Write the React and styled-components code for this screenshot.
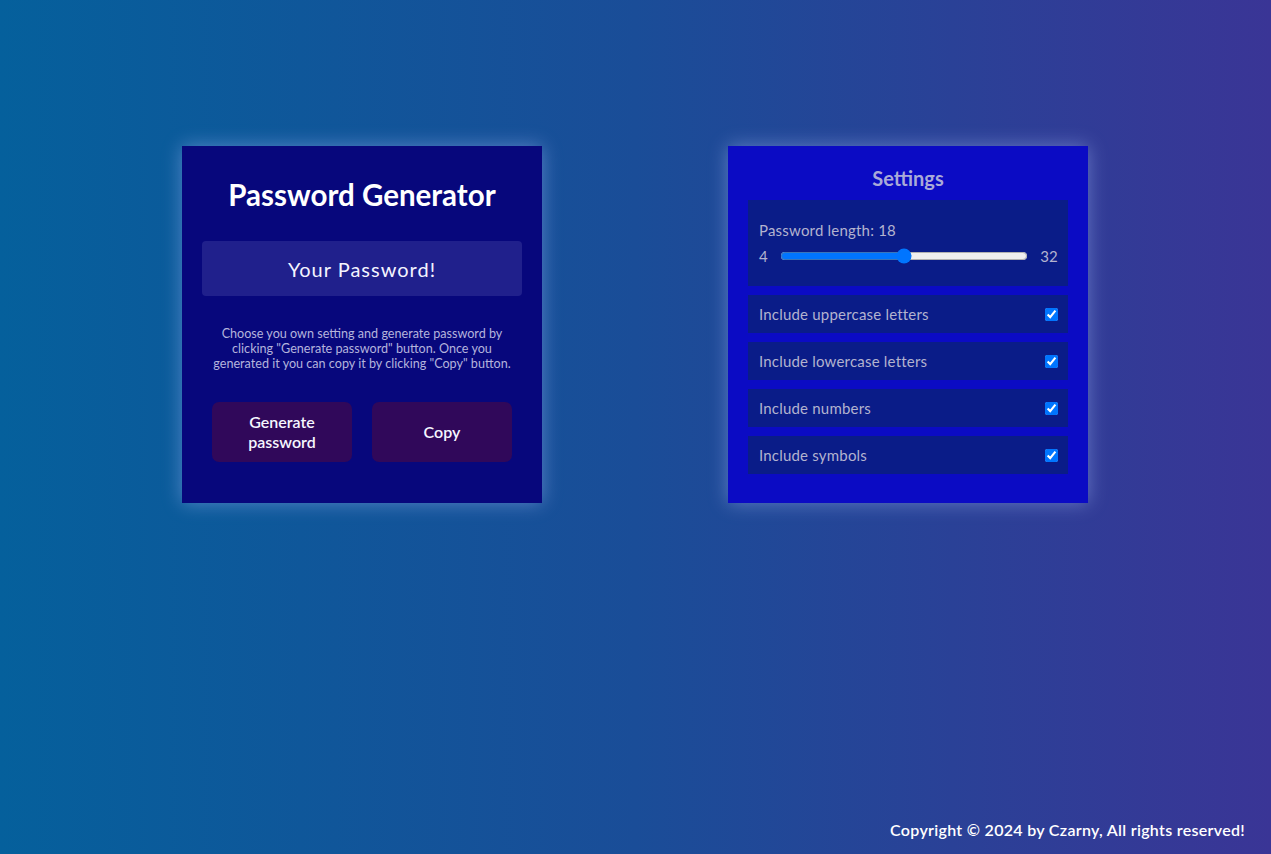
import React, { useState } from "react";
import styled, { createGlobalStyle } from "styled-components";

const GlobalStyle = createGlobalStyle`
  * { box-sizing: border-box; }
  html, body { margin: 0; padding: 0; }
  body {
    font-family: "Lato", "Noto Sans", sans-serif;
    background: linear-gradient(90deg, #05609c 0%, #1a4d98 50%, #3a3596 100%);
    min-height: 100vh;
  }
`;

const Page = styled.div`
  min-height: 100vh;
  display: flex;
  flex-direction: column;
`;

const Main = styled.main`
  flex: 1;
  display: flex;
  justify-content: center;
  align-items: flex-start;
  gap: 186px;
  padding: 146px 1px 0 0;
`;

const Card = styled.section`
  width: 360px;
  height: 357px;
  padding: 20px;
  background: ${(p) => p.$bg};
  box-shadow: 0 0 18px rgba(170, 190, 255, 0.45);
  display: flex;
  flex-direction: column;
  align-items: center;
`;

const Title = styled.h1`
  margin: 11px 0 0;
  font-size: 29.5px;
  font-weight: 700;
  color: #ffffff;
`;

const PasswordBox = styled.div`
  margin-top: 29px;
  width: 100%;
  height: 55px;
  border-radius: 4px;
  background: #20208c;
  display: flex;
  align-items: center;
  justify-content: center;
  color: #f4f4ff;
  font-size: 20px;
  letter-spacing: 1px;
`;

const Info = styled.p`
  margin: 30px 0 0;
  padding: 0 6px;
  font-size: 12.6px;
  line-height: 15px;
  text-align: center;
  color: #b4b4dc;
`;

const Buttons = styled.div`
  margin-top: 31px;
  display: flex;
  gap: 20px;
`;

const Button = styled.button`
  width: 140px;
  height: 60px;
  border: none;
  border-radius: 7px;
  background: #30085a;
  color: #f6f6ff;
  font-family: inherit;
  font-size: 16px;
  font-weight: 600;
  line-height: 20px;
  padding: 0 20px;
  cursor: pointer;
`;

const SettingsTitle = styled.h2`
  margin: 0 0 10px;
  font-size: 20px;
  font-weight: 700;
  color: #a9aad8;
`;

const Row = styled.label`
  width: 100%;
  height: ${(p) => p.$h || 38}px;
  margin-bottom: 9px;
  padding: 0 10px 0 11px;
  background: #0a1c88;
  display: flex;
  flex-direction: ${(p) => (p.$column ? "column" : "row")};
  justify-content: ${(p) => (p.$column ? "center" : "space-between")};
  align-items: ${(p) => (p.$column ? "stretch" : "center")};
  color: #b3b3cf;
  font-size: 15px;
  letter-spacing: 0.2px;
`;

const SliderLine = styled.div`
  display: flex;
  align-items: center;
  gap: 8px;
  margin-top: 8px;
`;

const Range = styled.input`
  flex: 1;
  margin: 0 4px;
`;

const Check = styled.input`
  margin: 0;
  width: 13px;
  height: 13px;
`;

const Footer = styled.footer`
  padding: 0 26px 15px;
  text-align: right;
  color: #ffffff;
  font-size: 16px;
  font-weight: 600;
  letter-spacing: 0.3px;
`;

const options = [
  "Include uppercase letters",
  "Include lowercase letters",
  "Include numbers",
  "Include symbols",
];

export default function App() {
  const [length, setLength] = useState(18);
  const [checks, setChecks] = useState([true, true, true, true]);

  return (
    <Page>
      <GlobalStyle />
      <Main>
        <Card $bg="#07077c">
          <Title>Password Generator</Title>
          <PasswordBox>Your Password!</PasswordBox>
          <Info>
            Choose you own setting and generate password by clicking "Generate
            password" button. Once you generated it you can copy it by clicking
            "Copy" button.
          </Info>
          <Buttons>
            <Button>Generate password</Button>
            <Button>Copy</Button>
          </Buttons>
        </Card>
        <Card $bg="#0b0bc4">
          <SettingsTitle>Settings</SettingsTitle>
          <Row as="div" $column $h={86}>
            <span>Password length: {length}</span>
            <SliderLine>
              <span>4</span>
              <Range
                type="range"
                min={4}
                max={32}
                value={length}
                onChange={(e) => setLength(Number(e.target.value))}
              />
              <span>32</span>
            </SliderLine>
          </Row>
          {options.map((o, i) => (
            <Row key={o}>
              <span>{o}</span>
              <Check
                type="checkbox"
                checked={checks[i]}
                onChange={() =>
                  setChecks(checks.map((c, j) => (j === i ? !c : c)))
                }
              />
            </Row>
          ))}
        </Card>
      </Main>
      <Footer>Copyright © 2024 by Czarny, All rights reserved!</Footer>
    </Page>
  );
}
